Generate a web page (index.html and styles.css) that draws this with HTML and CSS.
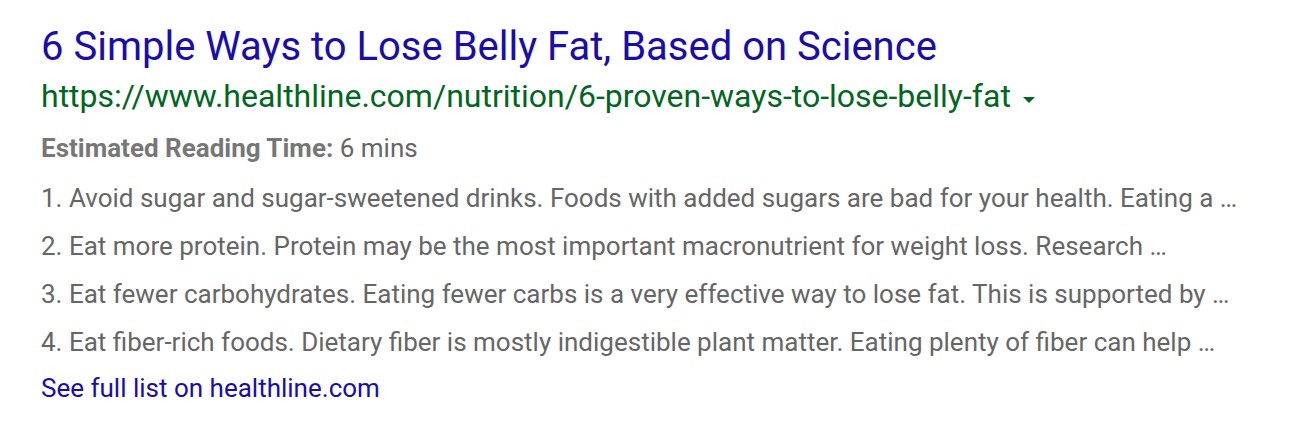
FILE: index.html
```html
<!DOCTYPE html>
<html>
<head>
<meta charset="utf-8">
<link rel="stylesheet" href="styles.css">
</head>
<body>
<div class="result">
  <a class="title" href="#">6 Simple Ways to Lose Belly Fat, Based on Science</a>
  <div class="url-row">
    <span class="url">https://www.healthline.com/nutrition/6-proven-ways-to-lose-belly-fat</span>
    <span class="caret"></span>
  </div>
  <div class="meta"><b>Estimated Reading Time:</b> 6 mins</div>
  <ol class="list">
    <li>1. Avoid sugar and sugar-sweetened drinks. Foods with added sugars are bad for your health. Eating a …</li>
    <li>2. Eat more protein. Protein may be the most important macronutrient for weight loss. Research …</li>
    <li>3. Eat fewer carbohydrates. Eating fewer carbs is a very effective way to lose fat. This is supported by …</li>
    <li>4. Eat fiber-rich foods. Dietary fiber is mostly indigestible plant matter. Eating plenty of fiber can help …</li>
  </ol>
  <a class="more" href="#">See full list on healthline.com</a>
</div>
</body>
</html>
```
FILE: styles.css
```css
html, body {
  margin: 0;
  padding: 0;
  background: #fff;
}
body {
  font-family: Roboto, "Liberation Sans", Arial, sans-serif;
}
.result {
  padding: 23px 0 0 41px;
  display: flex;
  flex-direction: column;
  align-items: flex-start;
}
.title {
  font-size: 40px;
  line-height: 48px;
  color: #1a0dab;
  text-decoration: none;
}
.url-row {
  display: flex;
  align-items: center;
  margin-top: 5px;
  height: 40px;
}
.url {
  font-size: 32px;
  line-height: 40px;
  color: #006621;
}
.caret {
  width: 0;
  height: 0;
  border-left: 6.5px solid transparent;
  border-right: 6.5px solid transparent;
  border-top: 6px solid #006621;
  margin-left: 12px;
  margin-top: 7px;
}
.meta {
  margin-top: 8px;
  font-size: 26px;
  line-height: 48px;
  color: #666;
}
.meta b {
  color: #777;
  font-weight: 700;
}
.list {
  list-style: none;
  margin: 2px 0 0;
  padding: 0;
  display: flex;
  flex-direction: column;
}
.list li {
  font-size: 26px;
  line-height: 48px;
  color: #666;
  white-space: nowrap;
}
.more {
  margin-top: -2px;
  font-size: 26px;
  line-height: 48px;
  color: #1a0dab;
  text-decoration: none;
}
```
